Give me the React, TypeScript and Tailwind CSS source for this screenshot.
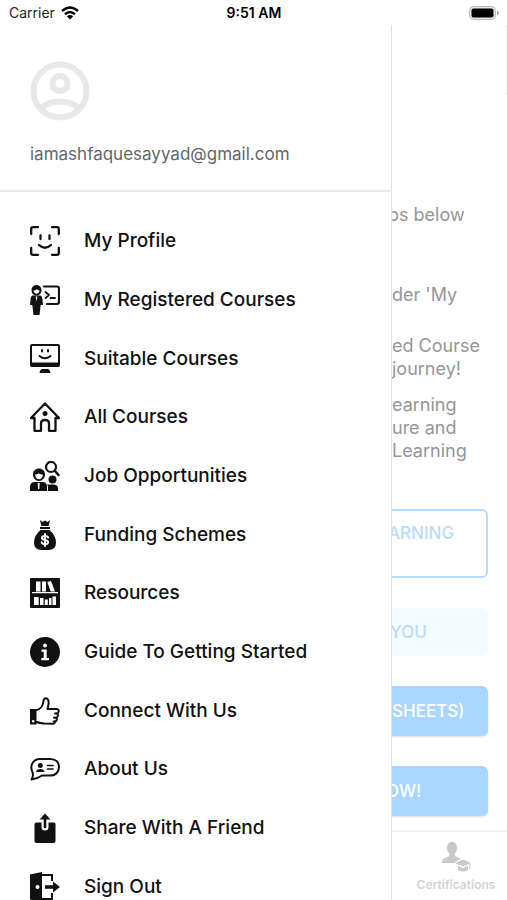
import type { ReactNode } from "react";

const line = {
  fill: "none",
  stroke: "currentColor",
  strokeWidth: 2,
  strokeLinecap: "round" as const,
  strokeLinejoin: "round" as const,
};

function Icon({ children }: { children: ReactNode }) {
  return (
    <svg viewBox="0 0 30 30" className="size-[30px] shrink-0" fill="currentColor" aria-hidden="true">
      {children}
    </svg>
  );
}

const items: { label: string; icon: ReactNode }[] = [
  {
    label: "My Profile",
    icon: (
      <g {...line} strokeWidth={2.3}>
        <path d="M1.200 8V3Q1.200 1.200 3 1.200H8M22 1.200H27Q28.800 1.200 28.800 3V8M28.800 22V27Q28.800 28.800 27 28.800H22M8 28.800H3Q1.200 28.800 1.200 27V22" />
        <path d="M10.500 9.500V13M19.500 9.500V13M9 19Q15 24.500 21 19" />
      </g>
    ),
  },
  {
    label: "My Registered Courses",
    icon: (
      <>
        <path
          fillRule="evenodd"
          d="M6.500 0A5 5 0 0 1 11.500 5C11.500 8 9.500 10.500 6.500 10.500S1.500 8 1.500 5A5 5 0 0 1 6.500 0ZM3.400 5.500C3.700 7.500 4.900 8.700 6.500 8.700S9.300 7.500 9.600 5.500C8 5.300 7.400 4.700 6.800 4C6 5 5 5.500 3.400 5.500Z"
        />
        <path d="M2.500 10.500H10.500Q12 11 12.300 13L13 20H10.700L9.500 30H3.500L2.300 20H0L.7 13Q1 11 2.500 10.500Z" />
        <path fill="#fff" d="M5.600 11.500H7.400L6.500 16.500Z" />
        <path {...line} strokeWidth={2.200} d="M14 1.500H27Q29 1.500 29 3.500V17Q29 19 27 19H17" />
        <path {...line} strokeWidth={1.800} d="M15.500 7L19 10L15.500 13M20.500 13H25" />
      </>
    ),
  },
  {
    label: "Suitable Courses",
    icon: (
      <>
        <rect {...line} x="1" y="1" width="28" height="21" rx="1" />
        <path d="M1 18.500H29V22.500H1ZM12 25H18Q20 25.500 20.500 29H9.500Q10 25.500 12 25Z" />
        <path {...line} strokeWidth={2} d="M12 6V7.500M18 6V7.500M9.500 12Q15 16.500 20.500 12" />
      </>
    ),
  },
  {
    label: "All Courses",
    icon: (
      <>
        <path {...line} strokeWidth={2.300} d="M1 16L15 1.500L29 16H25.500V28.800H19V21.500Q19 18 15 18T11 21.500V28.800H4.500V16Z" />
        <circle cx="15" cy="11.500" r="2.500" />
      </>
    ),
  },
  {
    label: "Job Opportunities",
    icon: (
      <>
        <circle {...line} strokeWidth={2.200} cx="21" cy="6" r="5" />
        <path {...line} strokeWidth={2.500} d="M25 10L28.500 14" />
        <path
          fillRule="evenodd"
          d="M9 7.500C12.500 7.500 15 10 15 13.500S12.500 20 9 20 3 17 3 13.500 5.500 7.500 9 7.500ZM5 13.500C5.300 16.500 6.800 18.300 9 18.300S12.700 16.500 13 13.500C11 13.500 9.500 13 8.500 12.200C7.500 13.200 6.500 13.500 5 13.500Z"
        />
        <path d="M0 30V26Q0 21 5 21H12.500Q17 21 17 26V30Z" />
        <path fill="#fff" d="M7.700 22H9.700L9.300 28H8.100Z" />
        <circle cx="22.500" cy="18.500" r="4" />
        <path d="M18 30V26Q17.800 24.500 17 23.500H24Q28 24 28 27V30Z" />
      </>
    ),
  },
  {
    label: "Funding Schemes",
    icon: (
      <>
        <path d="M10 0L12.500 2L15 .5L17.500 2L20 0L18.700 6H11.300ZM10 7H20V9H10ZM10.500 10H19.500C24 14 26 18 26 22.500Q26 30 18.500 30H11.500Q4 30 4 22.500C4 18 6 14 10.500 10Z" />
        <path
          fill="none"
          stroke="#fff"
          strokeWidth={2}
          strokeLinecap="round"
          d="M15 14V26M18.200 17.500Q17.500 16 15 16C11 16 11 19.500 15 20S19 24.200 15 24.200Q12.300 24.200 11.700 22.300"
        />
      </>
    ),
  },
  {
    label: "Resources",
    icon: (
      <>
        <rect width="30" height="30" rx="1" />
        <path
          fill="#fff"
          d="M6 3.500H10.500V13.500H6ZM12 3.500H16V13.500H12ZM17.300 4L21 3L25 13.500H20.700ZM2 14H28V15.300H2ZM4 19H8.700V27H4ZM10 20H13.500V27H10ZM14.800 21.500H17.800V27H14.800ZM19 20H21.500V27H19ZM22.500 18.500H26V27H22.500Z"
        />
      </>
    ),
  },
  {
    label: "Guide To Getting Started",
    icon: (
      <>
        <circle cx="15" cy="15" r="15" />
        <circle cx="15" cy="8.500" r="2" fill="#fff" />
        <path fill="#fff" d="M11.500 12.500H16.700V21H19V23.300H11.300V21H13.700V14.800H11.500Z" />
      </>
    ),
  },
  {
    label: "Connect With Us",
    icon: (
      <>
        <path fillRule="evenodd" d="M0 13H6.500V28.500H0ZM3.200 24A1.300 1.300 0 1 0 3.200 26.600 1.300 1.300 0 1 0 3.200 24Z" />
        <path
          {...line}
          d="M6.500 14C10 13.500 13 10 13.500 5Q14 2 16 2.300C19.500 2.800 19 8 17.500 13H27Q29 13.500 28.700 15.500Q28.500 17.300 26.500 17.500Q28.300 18 27.900 20Q27.500 21.700 25.700 21.700Q27.300 22.500 26.700 24.200Q26.200 25.500 24.700 25.500Q25.500 27.500 22.500 27.800L14 27.500Q9 27 6.500 26"
        />
        <path {...line} d="M25 17.500H26.500M24 21.700H25.700M23.500 25.500H24.700" />
      </>
    ),
  },
  {
    label: "About Us",
    icon: (
      <>
        <path {...line} d="M10 5H20C26 5 29 8.500 29 13S26 21.500 20 21.500H12Q7 25 1.500 25.500Q3.500 22.500 2.800 19C-1 12 3 5 10 5Z" />
        <circle cx="10.300" cy="11.500" r="2.500" />
        <path d="M6 18Q6.500 15 10.300 15T14.500 18Z" />
        <path {...line} strokeWidth={1.700} d="M17.500 11.500H23M17.500 15H23" />
      </>
    ),
  },
  {
    label: "Share With A Friend",
    icon: (
      <>
        <path d="M6 9.500H11.500V14Q11.500 17.500 15 17.500T18.500 14V9.500H24Q25.500 9.500 25.500 11V28Q25.500 30 23.500 30H6.500Q4.500 30 4.500 28V11Q4.500 9.500 6 9.500Z" />
        <path d="M15 .5L20.500 6.500H16.300V14Q16.300 15.300 15 15.300T13.700 14V6.500H9.500Z" />
      </>
    ),
  },
  {
    label: "Sign Out",
    icon: (
      <>
        <path
          fillRule="evenodd"
          d="M0 2.500L12 0V30L0 27.500ZM7.500 13A2 2 0 1 0 7.500 17 2 2 0 1 0 7.500 13Z"
        />
        <path fill="none" stroke="currentColor" strokeWidth={2} d="M12 3H22V9M22 21V27H12" />
        <path d="M15 13.300H23V9.500L30 15L23 20.500V16.700H15Z" />
      </>
    ),
  },
];

function Drawer() {
  return (
    <aside className="flex w-[392px] shrink-0 flex-col overflow-hidden border-r border-[#dedede] bg-white">
      <header className="border-b-2 border-[#e8e8e8] px-[30px] pt-9 pb-6">
        <svg viewBox="0 0 60 60" className="size-[60px]" fill="none" stroke="#e8e8e8" strokeWidth={6} aria-hidden="true">
          <circle cx="30" cy="30" r="26.500" />
          <circle cx="30" cy="22.500" r="7.500" />
          <path d="M10 48Q18 40.500 30 40.500T50 48" />
        </svg>
        <p className="mt-[21px] text-[17px] leading-6 text-[#666]">iamashfaquesayyad@gmail.com</p>
      </header>
      <nav className="pt-5" aria-label="Main menu">
        <ul className="grid h-[704px] auto-rows-fr">
          {items.map(({ label, icon }) => (
            <li key={label} className="flex">
              <a href="#" className="flex flex-1 items-center gap-6 px-[30px] text-[19px] leading-6 font-medium text-[#111]">
                <Icon>{icon}</Icon>
                {label}
              </a>
            </li>
          ))}
        </ul>
      </nav>
    </aside>
  );
}

function Content() {
  return (
    <main className="flex min-w-0 flex-1 flex-col overflow-hidden">
      <div className="h-[70px] shrink-0 border-r border-[#f3f3f3]" />
      <div className="min-h-0 flex-1 pr-[19px] text-[18px] leading-[23px] whitespace-nowrap text-[#969696]">
        <p className="-ml-1 pt-[108px]">ps below</p>
        <p className="pt-[57px]">der &apos;My</p>
        <p className="pt-7">
          ed Course
          <br />
          journey!
        </p>
        <p className="pt-[13px]">
          earning
          <br />
          ure and
          <br />
          Learning
        </p>
        <div className="-ml-4 flex flex-col text-left text-[17px] leading-6 font-medium">
          <button className="mt-[47px] flex h-[69px] rounded-md border-2 border-[#b5dcff] pt-[10px] pl-[10px] text-[#b5dcff]">
            ARNING
          </button>
          <button className="mt-[30px] flex h-12 items-center rounded-md bg-[#f6fbff] pl-[14px] text-[#b5dcff]">YOU</button>
          <button className="mt-[30px] flex h-[50px] items-center rounded-md bg-[#a9d7ff] pl-4 text-white shadow-sm">
            SHEETS)
          </button>
          <button className="mt-[30px] flex h-[50px] items-center rounded-md bg-[#a9d7ff] pl-[10px] text-white shadow-sm">
            OW!
          </button>
        </div>
      </div>
      <footer className="flex h-[70px] shrink-0 justify-end border-t-2 border-[#f3f3f3]">
        <a href="#" className="flex w-[102px] flex-col items-center pt-[10px] text-xs leading-4 font-semibold text-[#d3d3d3]">
          <svg viewBox="0 0 30 30" className="size-[30px]" fill="#c9c9c9" aria-hidden="true">
            <path d="M11 0C14.500 0 16 2.500 16 6C16 8.500 15 10.500 14 11.500V14L20 17L14 20V21H1Q1 17 4 16L8.500 14V11.500C7 10.500 6 8.500 6 6C6 2.500 7.500 0 11 0Z" />
            <path d="M22 17.500L30 21L22 24.500L14 21ZM17 23.800L22 26L27 23.800V28Q22 31 17 28ZM28.300 22H29.300V27H28.300Z" />
          </svg>
          <span className="mt-[5px]">Certifications</span>
        </a>
      </footer>
    </main>
  );
}

export default function App() {
  return (
    <div className="flex h-screen flex-col overflow-hidden bg-white font-['Inter','Liberation_Sans',sans-serif]">
      <div className="grid h-[25px] shrink-0 grid-cols-3 items-center pt-px pr-2 pl-[9px] text-sm leading-5 text-[#222]">
        <span className="flex items-center gap-[6px]">
          Carrier
          <svg viewBox="0 0 18 14" className="h-[14px] w-[18px]" fill="none" stroke="#000" strokeWidth={2.500} aria-hidden="true">
            <path d="M1 5Q9 -2 17 5M4 8.200Q9 3.800 14 8.200" />
            <path d="M9 13.500L5.800 10.300Q9 7.600 12.200 10.300Z" fill="#000" stroke="none" />
          </svg>
        </span>
        <span className="text-center font-semibold text-black">9:51 AM</span>
        <svg viewBox="0 0 30 14" className="h-[14px] w-[30px] justify-self-end" aria-hidden="true">
          <rect x=".5" y=".5" width="26" height="13" rx="4" fill="#e5e5e5" stroke="#bbb" />
          <rect x="2.500" y="2.500" width="22" height="9" rx="2" fill="#000" />
          <path d="M28 4.500Q30 5.500 30 7T28 9.500Z" fill="#aaa" />
        </svg>
      </div>
      <div className="flex min-h-0 flex-1">
        <Drawer />
        <Content />
      </div>
    </div>
  );
}
